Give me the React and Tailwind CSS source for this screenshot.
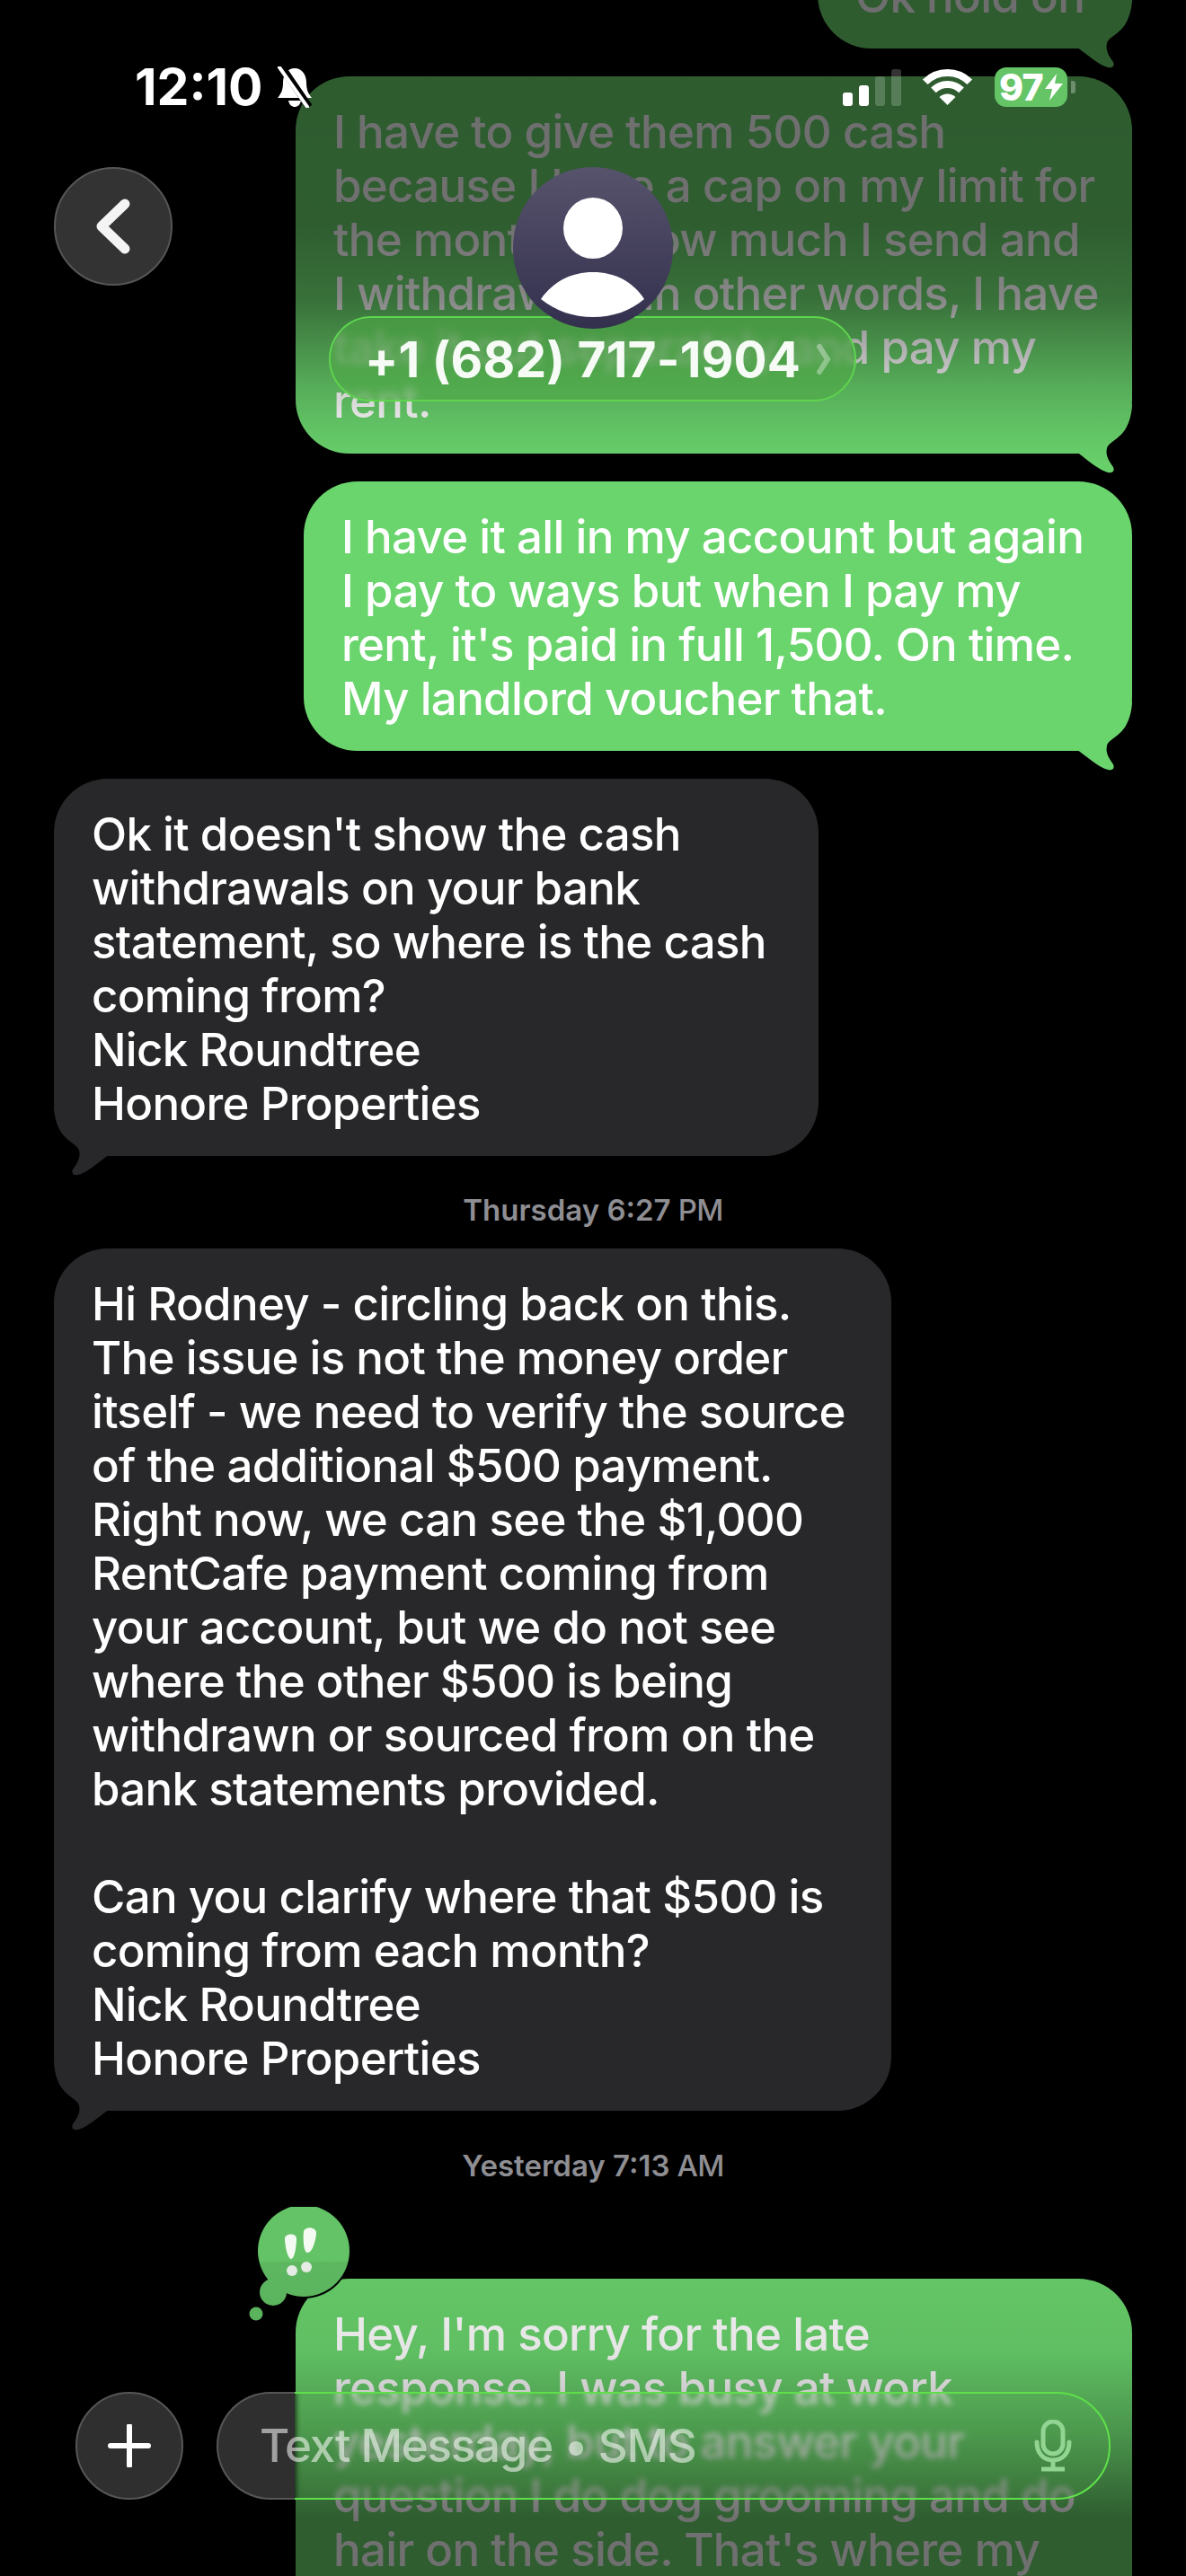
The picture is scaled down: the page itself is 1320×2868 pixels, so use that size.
import React from 'react';

// --- Small drawings ---

const Tail = ({ side, color }) => (
  <svg
    width="80"
    height="90"
    viewBox="-70 -65 80 90"
    className={`absolute bottom-[-25px] ${side === 'right' ? 'right-[-10px]' : 'left-[-10px] -scale-x-100'}`}
  >
    <path
      d="M-62 -2 C-52 5 -38 18 -27 21 C-22 22 -19 20 -21 15 C-25 9 -30 3 -28 -6 C-26 -13 -14 -16 -7 -28 C-3 -35 0 -45 0 -56 L-40 -40 Z"
      fill={color}
    />
  </svg>
);

const Bubble = ({ side, lines, className }) => {
  const isRight = side === 'right';
  return (
    <div
      className={`relative rounded-[60px] px-[42px] pt-[32px] pb-[28px] text-[51px] font-[450] leading-[60px] tracking-[-0.7px] text-white whitespace-nowrap ${
        isRight ? 'self-end bg-[#6ad46d]' : 'self-start bg-[#28282a]'
      } ${className}`}
    >
      {lines.map((line, i) => (
        <div key={i} className="h-[60px]">{line}</div>
      ))}
      <Tail side={side} color={isRight ? '#6ad46d' : '#28282a'} />
    </div>
  );
};

const Stamp = ({ day, time, tail, className }) => (
  <div className={`self-center text-center text-[33px] leading-[40px] font-semibold text-[#8e8e93] ${className}`}>
    {day} {time}
    <span className="font-medium tracking-[-0.02em]"> {tail}</span>
  </div>
);

const StatusBar = () => (
  <div className="absolute left-[150px] right-[123px] top-[74px] z-30 flex h-[46px] items-center justify-between text-white">
    <div className="flex items-center gap-[13px]">
      <span className="text-[57px] leading-[46px] font-bold">12:10</span>
      <svg width="44" height="46" viewBox="0 0 44 46">
        <path d="M22 2 C30 2 35 9 35 18 C35 26 37 30 41 35 L3 35 C7 30 9 26 9 18 C9 9 14 2 22 2 Z" fill="#fff" />
        <path d="M15 38 L29 38 C28 43 25 45 22 45 C19 45 16 43 15 38 Z" fill="#fff" />
        <path d="M8 1 L38 45" stroke="#000" strokeWidth="8" />
        <path d="M5 1 L36 45" stroke="#fff" strokeWidth="4" strokeLinecap="round" />
      </svg>
    </div>
    <div className="flex items-center">
      <div className="mr-[23px] flex items-end gap-[7px]">
        <div className="h-[15px] w-[11px] rounded-[3px] bg-white" />
        <div className="h-[23px] w-[11px] rounded-[3px] bg-white" />
        <div className="h-[33px] w-[11px] rounded-[3px] bg-white/20" />
        <div className="h-[41px] w-[11px] rounded-[3px] bg-white/20" />
      </div>
      <svg width="57" height="42" viewBox="0 0 57 42" className="mr-[24px]">
        <path d="M3.75 15.25 A35 35 0 0 1 53.25 15.25" fill="none" stroke="#fff" strokeWidth="8" />
        <path d="M12.94 24.44 A22 22 0 0 1 44.06 24.44" fill="none" stroke="#fff" strokeWidth="8" />
        <path d="M28.5 41 L19.5 32 A13 13 0 0 1 37.5 32 Z" fill="#fff" />
      </svg>
      <div className="flex h-[44px] w-[81px] items-center justify-center gap-[2px] rounded-[13px] bg-[#65c466]">
        <span className="text-[41px] leading-[44px] font-extrabold tracking-[-0.02em]">97</span>
        <svg width="20" height="30" viewBox="0 0 20 30">
          <path d="M13 0 L0 17 L8 17 L5 30 L20 11 L11 11 Z" fill="#fff" />
        </svg>
      </div>
      <div className="ml-[4px] h-[14px] w-[5px] rounded-r-[3px] bg-white/30" />
    </div>
  </div>
);

const Header = () => (
  <>
    <button className="absolute left-[60px] top-[186px] z-20 flex h-[132px] w-[132px] items-center justify-center rounded-full border-2 border-[#565656] bg-[#333333]">
      <svg width="40" height="62" viewBox="0 0 40 62">
        <path d="M33 6 L7 31 L33 56" fill="none" stroke="#f4f4f4" strokeWidth="11" strokeLinecap="round" strokeLinejoin="round" />
      </svg>
    </button>
    <div className="absolute left-[366px] top-[352px] z-20 flex h-[95px] w-[587px] items-center overflow-hidden rounded-full border-2 border-[#5fd44f] bg-[#4ea846]/60 pl-[38px] backdrop-blur-[4px]">
      <span className="text-[55px] font-bold leading-[60px] tracking-[0.2px] text-[#f6fbf6]">+1 (682) 717-1904</span>
      <svg width="16" height="36" viewBox="0 0 16 36" className="ml-[18px]">
        <path d="M3 4 L12 18 L3 32" fill="none" stroke="#ffffff" strokeOpacity="0.35" strokeWidth="6" strokeLinecap="round" />
      </svg>
    </div>
    <div className="absolute left-[571px] top-[186px] z-20 h-[180px] w-[178px] overflow-hidden rounded-full bg-[linear-gradient(180deg,#57536c,#33304e)]">
      <svg width="178" height="180" viewBox="0 0 178 180">
        <ellipse cx="89" cy="68" rx="33" ry="34" fill="#fff" />
        <path d="M31 147 C45 127 65 117 89 117 C113 117 133 127 146 147 C131 160 111 167 89 167 C67 167 47 160 31 147 Z" fill="#fff" />
      </svg>
    </div>
  </>
);

const Tapback = () => (
  <svg width="120" height="140" viewBox="0 0 120 140" className="absolute left-[-60px] top-[-80px]">
    <circle cx="69" cy="49" r="53" fill="#000" />
    <circle cx="35" cy="95" r="15" fill="#63c366" />
    <circle cx="16" cy="119" r="7.5" fill="#63c366" />
    <circle cx="69" cy="49" r="51" fill="#63c366" />
    <path d="M48 35 C48 30 60 28 61 35 C61 43 59 58 55 58 C51 58 48 43 48 35 Z" fill="#f4fbf3" />
    <path d="M69 27 C71 21 84 22 83 30 C82 38 79 51 73 51 C69 51 68 36 69 27 Z" fill="#f4fbf3" />
    <circle cx="56" cy="71" r="6" fill="#f4fbf3" />
    <circle cx="72" cy="67" r="6" fill="#f4fbf3" />
  </svg>
);

const InputBar = () => (
  <div className="absolute left-[84px] top-[2663px] z-20 flex w-[1152px] items-stretch gap-[37px]">
    <button className="flex h-[120px] w-[120px] shrink-0 items-center justify-center rounded-full border-2 border-[#565656] bg-[#2f2f2f]">
      <svg width="48" height="48" viewBox="0 0 48 48">
        <path d="M24 2 V46 M3 24 H45" stroke="#fff" strokeWidth="6" strokeLinecap="round" />
      </svg>
    </button>
    <div className="relative flex h-[120px] flex-1 items-center rounded-full bg-[#5fc45a]/[0.12] pl-[48px] pr-[43px] backdrop-blur-[3px]">
      {/* the part of the field that lies over the black page */}
      <div className="absolute inset-y-0 left-0 w-[87px] rounded-l-[60px] border-y-2 border-l-2 border-[#565656] bg-[#2f2f2f]" />
      <div className="absolute inset-y-0 left-[87px] right-0 overflow-hidden">
        <div className="absolute inset-y-0 left-[-87px] right-0 rounded-full border-2 border-[#5fe04a]" />
      </div>
      <span className="relative flex-1 text-[51px] font-[450] tracking-[-1.2px] text-white/55">Text Message • SMS</span>
      <svg width="42" height="58" viewBox="0 0 42 58" className="relative">
        <rect x="10" y="2" width="22" height="36" rx="11" fill="none" stroke="#92d492" strokeWidth="5" />
        <path d="M3 25 C3 38 11 45 21 45 C31 45 39 38 39 25" fill="none" stroke="#92d492" strokeWidth="5" strokeLinecap="round" />
        <path d="M21 45 V54 M8 55 H34" stroke="#92d492" strokeWidth="5" />
      </svg>
    </div>
  </div>
);

// --- Main Application ---

export default function App() {
  return (
    <div className="relative h-[2868px] w-[1320px] overflow-hidden bg-black font-['Inter',sans-serif]">
      {/* Conversation */}
      <div className="mt-[-126px] flex flex-col pl-[60px] pr-[60px]">
        <Bubble side="right" lines={['', 'Ok hold on']} className="w-[350px]" />
        <Bubble
          side="right"
          className="mt-[31px] w-[931px]"
          lines={[
            'I have to give them 500 cash',
            'because I have a cap on my limit for',
            'the month on how much I send and',
            'I withdraw. So in other words, I have',
            'take it out separately and pay my',
            'rent.',
          ]}
        />
        <Bubble
          side="right"
          className="mt-[31px] w-[922px]"
          lines={[
            'I have it all in my account but again',
            'I pay to ways but when I pay my',
            "rent, it's paid in full 1,500. On time.",
            'My landlord voucher that.',
          ]}
        />
        <Bubble
          side="left"
          className="mt-[31px] w-[851px]"
          lines={[
            "Ok it doesn't show the cash",
            'withdrawals on your bank',
            'statement, so where is the cash',
            'coming from?',
            'Nick Roundtree',
            'Honore Properties',
          ]}
        />
        <Stamp day="Thursday" time="6:27" tail="PM" className="mt-[40px]" />
        <Bubble
          side="left"
          className="mt-[23px] w-[932px]"
          lines={[
            'Hi Rodney - circling back on this.',
            'The issue is not the money order',
            'itself - we need to verify the source',
            'of the additional $500 payment.',
            'Right now, we can see the $1,000',
            'RentCafe payment coming from',
            'your account, but we do not see',
            'where the other $500 is being',
            'withdrawn or sourced from on the',
            'bank statements provided.',
            '',
            'Can you clarify where that $500 is',
            'coming from each month?',
            'Nick Roundtree',
            'Honore Properties',
          ]}
        />
        <Stamp day="Yesterday" time="7:13" tail="AM" className="mt-[41px]" />
        <div className="relative mt-[106px] self-end">
          <Bubble
            side="right"
            className="w-[931px]"
            lines={[
              "Hey, I'm sorry for the late",
              'response. I was busy at work',
              'yesterday, but to answer your',
              'question I do dog grooming and do',
              "hair on the side. That's where my",
              'extra money comes from.',
            ]}
          />
          <Tapback />
        </div>
      </div>

      {/* Fades behind the bars */}
      <div className="absolute inset-x-0 top-0 z-10 h-[536px] bg-[linear-gradient(180deg,rgba(0,0,0,0.57)_0,rgba(0,0,0,0.56)_250px,rgba(0,0,0,0.47)_333px,rgba(0,0,0,0.28)_400px,rgba(0,0,0,0.18)_433px,rgba(0,0,0,0.07)_483px,rgba(0,0,0,0)_536px)]" />
      <div className="absolute inset-x-0 bottom-0 z-10 h-[350px] bg-[linear-gradient(180deg,rgba(0,0,0,0.06)_0,rgba(0,0,0,0.1)_100px,rgba(0,0,0,0.3)_190px,rgba(0,0,0,0.56)_285px,rgba(0,0,0,0.56)_350px)]" />

      <StatusBar />
      <Header />
      <InputBar />
    </div>
  );
}
